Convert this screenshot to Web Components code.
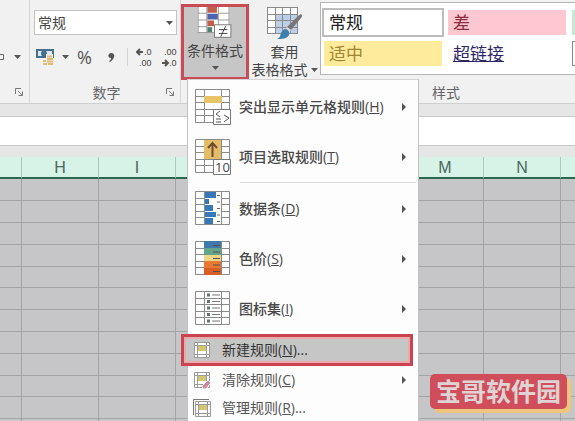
<!DOCTYPE html>
<html lang="zh-CN">
<head>
<meta charset="utf-8">
<title>条件格式</title>
<style>
    body { margin: 0; height: 100vh; overflow: hidden; display: flex; flex-direction: column; background: #e5e5e5; color: #505050; font: 14px/20px "Open Sans", "Noto Sans CJK SC", sans-serif; }
    sheet-grid { flex: 1; }
</style>
</head>
<body>
<ribbon-bar>
    <ribbon-group class="align"><align-tools></align-tools></ribbon-group>
    <ribbon-group class="number" label="数字"><number-tools></number-tools></ribbon-group>
    <ribbon-group class="styles" label="样式">
        <ribbon-button icon="cond" active>条件格式</ribbon-button>
        <ribbon-button icon="table" second="表格格式">套用</ribbon-button>
        <style-gallery></style-gallery>
        <drop-menu slot="menu">
            <menu-item icon="highlight" sub>突出显示单元格规则(<u>H</u>)</menu-item>
            <menu-item icon="top" sub>项目选取规则(<u>T</u>)</menu-item>
            <hr>
            <menu-item icon="bars" sub>数据条(<u>D</u>)</menu-item>
            <menu-item icon="scale" sub>色阶(<u>S</u>)</menu-item>
            <menu-item icon="set" sub>图标集(<u>I</u>)</menu-item>
            <menu-item icon="new" small marked>新建规则(<u>N</u>)...</menu-item>
            <menu-item icon="clear" small sub>清除规则(<u>C</u>)</menu-item>
            <menu-item icon="manage" small>管理规则(<u>R</u>)...</menu-item>
        </drop-menu>
    </ribbon-group>
</ribbon-bar>
<formula-bar></formula-bar>
<sheet-grid></sheet-grid>
<site-badge>宝哥软件园</site-badge>

<script>
const grid = (w, h, cols, rows) => {
    let d = '';
    for (let i = 0; i <= cols; i++) d += `M${Math.round(i * (w - 1) / cols) + 0.5} 0V${h}`;
    for (let i = 0; i <= rows; i++) d += `M0 ${Math.round(i * (h - 1) / rows) + 0.5}H${w}`;
    return `<path d="${d}" fill="none" stroke="#8a8a8a"/>`;
};
const big = body => `<svg width="36" height="36" viewBox="0 0 36 36">${body}</svg>`;
const white = '<rect width="35" height="34" fill="#fff"/>';
const frame = '<path d="M.5 .5H34.5V33.5H.5ZM9.5 0V34M26.5 0V34M0 7.500H35M0 13.500H35M0 20.500H35M0 26.500H35" fill="none" stroke="#8a8a8a"/>';
const smallGrid = '<path d="M1.500 1.500H16.500V16.500H1.500ZM4.500 1V17M13.500 1V17M1 4.500H17M1 13.500H17" fill="#fff" stroke="#9a9a9a"/><rect x="5" y="5" width="8" height="8" fill="#fff"/><rect x="5" y="5" width="8" height="5" fill="#d2c672"/>';

const ICONS = {
    cond: `<svg width="36" height="34" viewBox="0 0 36 34"><rect width="33" height="27" fill="#fff"/>
        <path d="M10 0h10v6H10z" fill="#c0604a"/><path d="M10 7h11v6H10z" fill="#4b64ad"/><path d="M10 14h7v6h-7z" fill="#c0604a"/><path d="M10 21h5v6h-5z" fill="#4c8170"/>
        <path d="M.5 0V27M9.500 0V27M21.500 0V27M32.500 0V27M0 6.500H10M21 6.500H33M0 13.500H10M21 13.500H33M0 20.500H10M0 26.500H33" fill="none" stroke="#9a9a9a"/><rect x="17.500" y="18.500" width="17" height="13" fill="#fff" stroke="#777"/><path d="M22 23.500h9M22 27.500h9M29 20l-5 11" stroke="#444" fill="none"/></svg>`,
    table: `<svg width="36" height="34" viewBox="0 0 36 34"><rect width="31" height="27" fill="#fff"/><path d="M8 7h23v20H8z" fill="#bccfe9"/>
        ${grid(31, 27, 4, 4)}<path d="M34 7c2 1 1 3 0 4L24 23l-4-3L31 9z" fill="#777"/><path d="M20 20l4 3-2 3-4-3z" fill="#ddd"/><path d="M18 22c3 0 5 3 4 6-2 4-7 4-12 4 3-1 3-3 4-6 1-2 2-3 4-4z" fill="#3d7fae"/></svg>`,
    highlight: big(`${white}${frame}<path d="M9 7h18v7H9z" fill="#e8c469"/>
        <path d="M18.500 20.500h17v15h-17z" fill="#fff" stroke="#777"/><path d="M25 22l-4 3 4 3M21 30h5M21 33h5M29 26l5 3-5 4" fill="none" stroke="#555"/>`),
    top: big(`${white}${frame}<path d="M9 1h17v19H9z" fill="#e3bd68"/><path d="M17.500 18V5M13 9l4.500-5L22 9" fill="none" stroke="#704a31" stroke-width="2"/>
        <path d="M18.500 20.500h17v15h-17z" fill="#fff" stroke="#777"/><text x="20" y="33" font-size="13" fill="#444">10</text>`),
    bars: big(`${white}${frame}<path d="M10 1h16v32H10z" fill="#fff"/><path d="M10 1h11v6H10zM10 8h4v5h-4zM10 14h8v6h-8zM10 21h11v5H10zM10 27h8v6h-8z" fill="#3878b8"/><path d="M22 4.500h3M22 11h3M22 17.500h3M22 24h3M22 30.500h3" stroke="#666"/>`),
    scale: big(`${white}${frame}<path d="M9 0h17v7H9z" fill="#4079ae"/><path d="M9 7h17v7H9z" fill="#63a58b"/><path d="M9 14h17v6H9z" fill="#efd48a"/><path d="M9 20h17v7H9z" fill="#e97835"/><path d="M9 27h17v7H9z" fill="#d95e25"/>
        <path d="M18 4.500h7M18 11h7M18 17.500h7M18 24h7M18 30.500h7" stroke="#55504a"/>`),
    set: big(`${white}${frame}<path d="M17 4h8M17 10.500h8M17 17h8M17 23.500h8M17 30h8" stroke="#777"/><path d="M12 4h3M12 10.500h3M12 17h3M12 23.500h3M12 30h3" stroke="#60776d" stroke-width="3"/>`),
    new: `<svg width="18" height="18" viewBox="0 0 18 18">${smallGrid}</svg>`,
    clear: `<svg width="18" height="18" viewBox="0 0 18 18">${smallGrid}<path d="M9 15l6-6 3 3-5 6h-3z" fill="#cf8b9c" stroke="#fff"/></svg>`,
    manage: `<svg width="18" height="18" viewBox="0 0 18 18"><path d="M.5 16V.5H16" fill="none" stroke="#777"/><g transform="translate(1 1)">${smallGrid}</g></svg>`,
    launcher: '<svg width="9" height="9" viewBox="0 0 9 9"><path d="M.5 6V.5H6M3 3l4 4M7.500 3.500v4h-4" fill="none" stroke="#777"/></svg>',
    arrow: '<svg width="7" height="4" viewBox="0 0 7 4"><path d="M0 0h7L3.500 4z" fill="#555"/></svg>'
};

const define = (name, build) => customElements.define(name, class extends HTMLElement {
    constructor() {
        super();
        this.attachShadow({ mode: 'open' });
    }
    connectedCallback() {
        this.shadowRoot.innerHTML = build(this);
    }
});

define('ribbon-bar', () => `
    <style>
        :host { display: flex; height: 103px; background: #f1f1f1; border-bottom: 1px solid #d0d0d0; }
    </style>
    <slot></slot>`);

define('ribbon-group', el => `
    <style>
        :host { display: flex; flex-direction: column; flex: none; position: relative; box-sizing: border-box; border-right: 1px solid #d8d8d8; }
        :host(.align) { width: 30px; }
        :host(.number) { width: 151px; padding-left: 4px; }
        :host(.styles) { padding-right: 7px; }
        .body { display: flex; height: 82px; }
        .foot { display: flex; align-items: center; height: 21px; padding: 0 5px 0 13px; }
        .foot span { flex: 1; text-align: center; color: #666; }
        button { border: 0; padding: 0; background: none; display: flex; }
        :host(.styles) .foot { padding: 0; }
        :host(.styles) .foot button { display: none; }
    </style>
    <div class="body"><slot></slot></div>
    <div class="foot"><span>${el.getAttribute('label') || ''}</span><button aria-label="更多选项">${ICONS.launcher}</button></div>
    <slot name="menu"></slot>`);

define('align-tools', () => `
    <style>
        :host { display: flex; align-items: flex-start; padding-top: 50px; }
        button { display: flex; align-items: center; gap: 10px; height: 14px; border: 0; padding: 0; background: none; }
    </style>
    <button aria-label="合并后居中"><svg width="4" height="10" viewBox="0 0 4 10"><path d="M0 2.500h3.500v5H0" fill="none" stroke="#666"/></svg>${ICONS.arrow}</button>`);

define('number-tools', () => `
    <style>
        :host { display: flex; flex-direction: column; padding-top: 10px; }
        label { display: grid; align-items: center; width: 143px; }
        select { grid-area: 1 / 1; appearance: none; height: 25px; border: 1px solid #c3c3c3; border-radius: 0; background: #fff; padding: 0 3px; font: inherit; color: #444; }
        label svg { grid-area: 1 / 1; justify-self: end; margin-right: 4px; pointer-events: none; }
        .tools { display: flex; align-items: center; height: 44px; padding-left: 2px; }
        button { border: 0; padding: 0; background: none; display: flex; align-items: center; justify-content: center; font: inherit; color: #555; }
        .money { gap: 7px; }
        .pct { width: 31px; font-size: 18px; }
        .comma { width: 22px; }
        i { width: 1px; height: 18px; background: #d4d4d4; margin: 0 8px 0 5px; }
        .dec { width: 18px; margin-right: 7px; }
        text { font: 9px "Liberation Sans", sans-serif; fill: #444; }
    </style>
    <label><select aria-label="数字格式"><option>常规</option></select>${ICONS.arrow}</label>
    <div class="tools">
        <button class="money" aria-label="会计数字格式"><svg width="19" height="20" viewBox="0 0 19 20"><path d="M0 2h18v9H0z" fill="#456f8c"/><path d="M2 4h14v5H2z" fill="#dbe8ed"/><circle cx="8" cy="6.500" r="3" fill="#456f8c"/><path d="M10 7h7v12H7v-6h3z" fill="#f1f1f1"/><path d="M11 9.500h5M11 12h6M11 14.500h6M12 17h5M7 14h3M7 17h4" stroke="#dfbd75" stroke-width="2"/></svg>${ICONS.arrow}</button>
        <button class="pct">%</button>
        <button class="comma" aria-label="千位分隔样式"><svg width="7" height="9" viewBox="0 0 7 9"><path d="M3 0c5 0 4 6-1 9L1 8c2-1 2-2 2-3C-1 5 0 0 3 0z" fill="#555"/></svg></button>
        <i></i>
        <button class="dec" aria-label="增加小数位数"><svg width="18" height="22" viewBox="0 0 18 22"><path d="M1 6h6M4 3L1 6l3 3" fill="none" stroke="#555" stroke-width="2"/><text x="8" y="9">.0</text><text x="3" y="20">.00</text></svg></button>
        <button class="dec" aria-label="减少小数位数"><svg width="18" height="22" viewBox="0 0 18 22"><text x="3" y="9">.00</text><path d="M1 17h6M4 14l3 3-3 3" fill="none" stroke="#555" stroke-width="2"/><text x="8" y="20">.0</text></svg></button>
    </div>`);

define('ribbon-button', el => {
    const second = el.getAttribute('second');
    return `
    <style>
        :host { display: flex; flex: none; padding-top: 4px; }
        button { display: flex; flex-direction: column; align-items: center; box-sizing: border-box; width: 71px; height: 76px; padding: 3px 0 0; border: 0; background: none; font: inherit; line-height: 18px; color: #444; }
        :host([active]) button { width: 68px; padding: 0; border: 3px solid #c94b57; background: #c6c6c6; }
        .label { margin-top: 2px; }
        .second { display: flex; align-items: center; gap: 3px; height: 18px; }
    </style>
    <button>${ICONS[el.getAttribute('icon')]}<span class="label"><slot></slot></span><span class="second">${second || ''}${ICONS.arrow}</span></button>`;
});

define('style-gallery', () => `
    <style>
        :host { display: grid; flex: none; grid-template-columns: repeat(3, 118px); grid-auto-rows: 25px; gap: 6px; box-sizing: border-box; height: 73px; margin-top: 2px; padding: 7px 20px 7px 3px; border: 1px solid #b5b5b5; background: #fff; }
        button { border: 0; padding: 0 5px; text-align: left; font: inherit; font-size: 17px; line-height: 24px; background: #fff; color: #222; }
        .on { box-shadow: 0 0 0 2px #bdbdbd; }
        .bad { background: #ffc7d0; color: #8c2a3e; }
        .good { background: #c6e9d6; }
        .mid { background: #ffeb9c; color: #a08432; }
        .link { color: #2b2767; text-decoration: underline; }
        .box { border: 1px solid #888; }
    </style>
    <button class="on">常规</button><button class="bad">差</button><button class="good" aria-label="好"></button>
    <button class="mid">适中</button><button class="link">超链接</button><button class="box" aria-label="计算"></button>`);

define('drop-menu', () => `
    <style>
        :host { display: block; position: absolute; z-index: 2; left: 6px; top: 79px; width: 230px; padding: 2px 0; background: #fdfdfd; border: 1px solid #c2c2c2; border-top-color: #d5d5d5; }
        ::slotted(hr) { margin: 0 2px 1px 52px; border: 0; border-top: 1px solid #dcdcdc; }
    </style>
    <slot></slot>`);

define('menu-item', el => `
    <style>
        :host { display: block; }
        button { display: flex; align-items: center; gap: 8px; box-sizing: border-box; width: 100%; height: 50px; padding: 0 12px 0 7px; border: 0; background: none; font: inherit; font-weight: 500; color: #484848; text-align: left; }
        span { flex: 1; white-space: nowrap; }
        svg { flex: none; }
        :host([small]) button { height: 28px; gap: 11px; padding-left: 5px; font-weight: 400; color: #555; }
        :host([marked]) { margin: 0 5px 0 -7px; }
        :host([marked]) button { height: 32px; padding-left: 9px; border: 3px solid #c94450; background: #c6c6c6; box-shadow: inset 0 0 0 2px #eba9ab; color: #333; }
    </style>
    <button>${ICONS[el.getAttribute('icon')]}<span><slot></slot></span>${el.hasAttribute('sub') ? '<svg width="4" height="8" viewBox="0 0 4 8"><path d="M0 0l4 4-4 4z" fill="#555"/></svg>' : ''}</button>`);

define('formula-bar', () => `
    <style>
        :host { display: block; padding: 12px 0 11px; background: #e6e6e6; }
        input { display: block; box-sizing: border-box; width: 100%; height: 30px; border: solid #c8c8c8; border-width: 1px 0; border-radius: 0; padding: 0 8px; background: #fff; font: inherit; }
    </style>
    <input aria-label="编辑栏">`);

define('sheet-grid', () => {
    const cols = ['', 'H', 'I', '', '', '', 'M', 'N', ''];
    const rows = Array.from({ length: 12 }, () => `<tr>${'<td></td>'.repeat(cols.length)}</tr>`).join('');
    return `
    <style>
        :host { display: block; overflow: hidden; background: #c6c5c8; }
        table { table-layout: fixed; width: 693px; margin-left: -55px; border-collapse: separate; border-spacing: 0; }
        th { box-sizing: border-box; height: 22px; padding: 1px 0 0; background: #d7f2e7; border-right: 1px solid #adc9bd; border-bottom: 2px solid #2c6850; font: 16px/19px "Liberation Sans", sans-serif; color: #4b685c; }
        td { box-sizing: border-box; height: 22px; padding: 0; border-right: 1px solid #a3a2a5; border-bottom: 1px solid #a3a2a5; }
        tr:nth-child(5n) td { height: 21px; }
    </style>
    <table><thead><tr>${cols.map(c => `<th>${c}</th>`).join('')}</tr></thead><tbody>${rows}</tbody></table>`;
});

define('site-badge', () => `
    <style>
        :host { display: block; position: absolute; right: 8px; bottom: 12px; z-index: 3; padding: 0 6px; border-radius: 5px; background: #d04e5b; box-shadow: 4px 4px 0 #edc57d; color: #e0d3d3; font-size: 25px; line-height: 35px; font-weight: 700; }
    </style>
    <slot></slot>`);
</script>
</body>
</html>
